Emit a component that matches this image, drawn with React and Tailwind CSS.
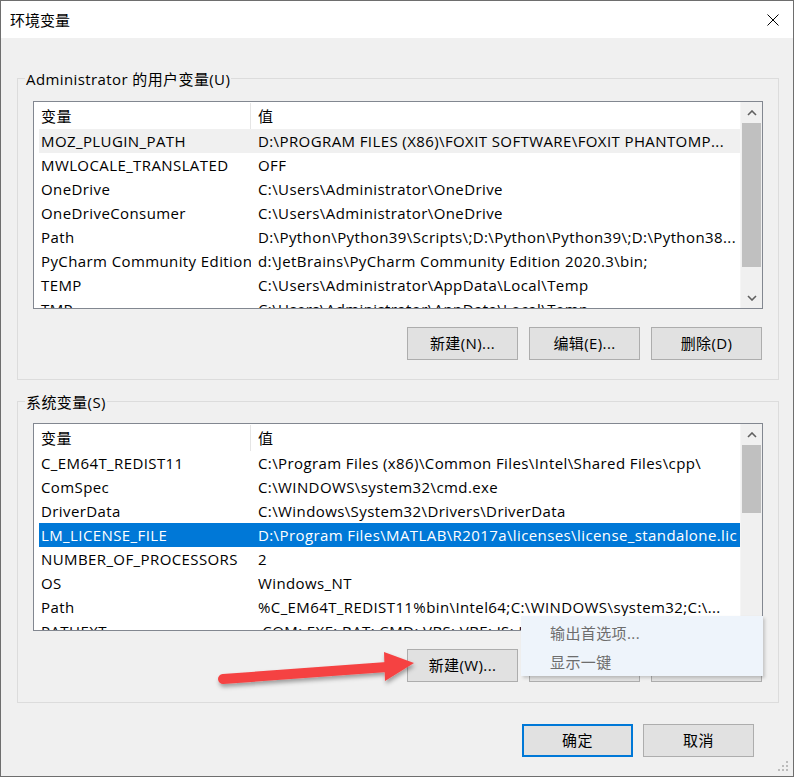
import React from "react";

const userVars = [
  ["MOZ_PLUGIN_PATH", "D:\\PROGRAM FILES (X86)\\FOXIT SOFTWARE\\FOXIT PHANTOMP..."],
  ["MWLOCALE_TRANSLATED", "OFF"],
  ["OneDrive", "C:\\Users\\Administrator\\OneDrive"],
  ["OneDriveConsumer", "C:\\Users\\Administrator\\OneDrive"],
  ["Path", "D:\\Python\\Python39\\Scripts\\;D:\\Python\\Python39\\;D:\\Python38..."],
  ["PyCharm Community Edition", "d:\\JetBrains\\PyCharm Community Edition 2020.3\\bin;"],
  ["TEMP", "C:\\Users\\Administrator\\AppData\\Local\\Temp"],
  ["TMP", "C:\\Users\\Administrator\\AppData\\Local\\Temp"],
];

const sysVars = [
  ["C_EM64T_REDIST11", "C:\\Program Files (x86)\\Common Files\\Intel\\Shared Files\\cpp\\"],
  ["ComSpec", "C:\\WINDOWS\\system32\\cmd.exe"],
  ["DriverData", "C:\\Windows\\System32\\Drivers\\DriverData"],
  ["LM_LICENSE_FILE", "D:\\Program Files\\MATLAB\\R2017a\\licenses\\license_standalone.lic"],
  ["NUMBER_OF_PROCESSORS", "2"],
  ["OS", "Windows_NT"],
  ["Path", "%C_EM64T_REDIST11%bin\\Intel64;C:\\WINDOWS\\system32;C:\\..."],
  ["PATHEXT", ".COM;.EXE;.BAT;.CMD;.VBS;.VBE;.JS;.JSE;.WSF;.WSH;.MSC"],
];

function Chevron({ up }) {
  return (
    <svg width="10" height="6" viewBox="0 0 10 6">
      <path
        d={up ? "M1 5 L5 1 L9 5" : "M1 1 L5 5 L9 1"}
        fill="none"
        stroke="#606060"
        strokeWidth="1.6"
      />
    </svg>
  );
}

function ListBox({ rows, hovered, selected, thumbH }) {
  return (
    <div className="h-[208px] border border-[#828790] bg-white flex overflow-hidden">
      <div className="flex-1 min-w-0 flex flex-col pl-[5px] overflow-hidden">
        <div className="h-[27px] shrink-0 flex">
          <div className="w-[212px] shrink-0 pl-[2px] pt-[1px] flex items-center border-r border-[#e5e5e5] mt-[1px]">变量</div>
          <div className="pl-[7px] pt-[1px] flex items-center">值</div>
        </div>
        {rows.map(([k, v], i) => {
          const bg =
            i === selected
              ? "bg-[#0078d7] text-white"
              : i === hovered
              ? "bg-[#f0f0f0]"
              : "";
          return (
            <div key={i} className={`h-[24px] shrink-0 flex items-center pt-[1px] ${bg}`}>
              <div className="w-[212px] shrink-0 pl-[2px] whitespace-nowrap overflow-hidden">{k}</div>
              <div className="pl-[7px] whitespace-nowrap overflow-hidden">{v}</div>
            </div>
          );
        })}
      </div>
      <div className="w-[22px] shrink-0 bg-[#f0f0f0] flex flex-col border-l border-[#f5f5f5]">
        <div className="h-[21px] shrink-0 flex items-center justify-center">
          <Chevron up />
        </div>
        <div className="ml-[1px] w-[19px] bg-[#c0c0c0] shrink-0" style={{ height: thumbH }} />
        <div className="flex-1" />
        <div className="h-[21px] shrink-0 flex items-center justify-center">
          <Chevron />
        </div>
      </div>
    </div>
  );
}

function Btn({ children, primary }) {
  return (
    <div
      className={`h-[33px] w-[111px] bg-[#e1e1e1] flex items-center justify-center ${
        primary ? "border-2 border-[#0078d7]" : "border border-[#adadad]"
      }`}
    >
      {children}
    </div>
  );
}

function Group({ title, children }) {
  return (
    <fieldset className="border border-[#dcdcdc] p-0 m-0 min-w-0">
      <legend className="ml-[7px] px-[1px] leading-[19px] pt-[2px]">{title}</legend>
      {children}
    </fieldset>
  );
}

export default function App() {
  return (
    <div className="relative w-[794px] h-[777px] border border-[#6e6e6e] bg-[#f0f0f0] flex flex-col text-[15px] tracking-[0.4px] text-black font-['Open_Sans','Noto_Sans_CJK_SC',sans-serif] overflow-hidden">
      <div className="h-[37px] shrink-0 bg-white flex items-center justify-between pl-[9px] pr-[14px] pt-[1px]">
        <span className="tracking-normal">环境变量</span>
        <svg width="12" height="12" viewBox="0 0 12 12">
          <path d="M0.5 0.5 L11.5 11.5 M11.5 0.5 L0.5 11.5" stroke="#000" strokeWidth="1" />
        </svg>
      </div>

      <div className="flex-1 flex flex-col pl-[16px] pr-[14px] pt-[30px]">
        <Group title="Administrator 的用户变量(U)">
          <div className="px-[15px] pt-[12px] pb-[19px]">
            <ListBox rows={userVars} hovered={0} selected={-1} thumbH={144} />
            <div className="mt-[18px] flex justify-end gap-[11px] pr-[1px]">
              <Btn>新建(N)...</Btn>
              <Btn>编辑(E)...</Btn>
              <Btn>删除(D)</Btn>
            </div>
          </div>
        </Group>

        <div className="mt-[11px]">
          <Group title="系统变量(S)">
            <div className="px-[15px] pt-[11px] pb-[20px]">
              <ListBox rows={sysVars} hovered={-1} selected={3} thumbH={68} />
              <div className="mt-[18px] flex justify-end gap-[11px] pr-[1px]">
                <Btn>新建(W)...</Btn>
                <Btn>编辑(I)...</Btn>
                <Btn>删除(L)</Btn>
              </div>
            </div>
          </Group>
        </div>

        <div className="mt-[21px] flex justify-end gap-[10px] pr-[25px]">
          <Btn primary>确定</Btn>
          <Btn>取消</Btn>
        </div>
      </div>

      {/* context menu */}
      <div className="absolute left-[520px] top-[615px] w-[242px] h-[60px] bg-[#eef4fb] shadow-[2px_2px_3px_rgba(0,0,0,0.18)] flex flex-col pt-[3px] text-[#6d6d6d]">
        <div className="h-[29px] flex items-center pl-[29px]">输出首选项...</div>
        <div className="h-[29px] flex items-center pl-[29px]">显示一键</div>
      </div>

      {/* red annotation arrow */}
      <svg className="absolute left-[200px] top-[640px]" width="230" height="60" viewBox="0 0 230 60">
        <defs>
          <filter id="sh" x="-20%" y="-50%" width="140%" height="200%">
            <feDropShadow dx="1" dy="3" stdDeviation="2" floodColor="#000" floodOpacity="0.35" />
          </filter>
        </defs>
        <g filter="url(#sh)" fill="#f54343">
          <line x1="22" y1="38" x2="186" y2="26" stroke="#f54343" strokeWidth="10" strokeLinecap="round" />
          <polygon points="183,11 184,40 213,22" />
        </g>
      </svg>

      {/* resize grip */}
      <svg className="absolute right-[3px] bottom-[3px]" width="12" height="12" viewBox="0 0 12 12" fill="#bcbcbc">
        <rect x="8" y="0" width="2" height="2" />
        <rect x="4" y="4" width="2" height="2" />
        <rect x="8" y="4" width="2" height="2" />
        <rect x="0" y="8" width="2" height="2" />
        <rect x="4" y="8" width="2" height="2" />
        <rect x="8" y="8" width="2" height="2" />
      </svg>
    </div>
  );
}
